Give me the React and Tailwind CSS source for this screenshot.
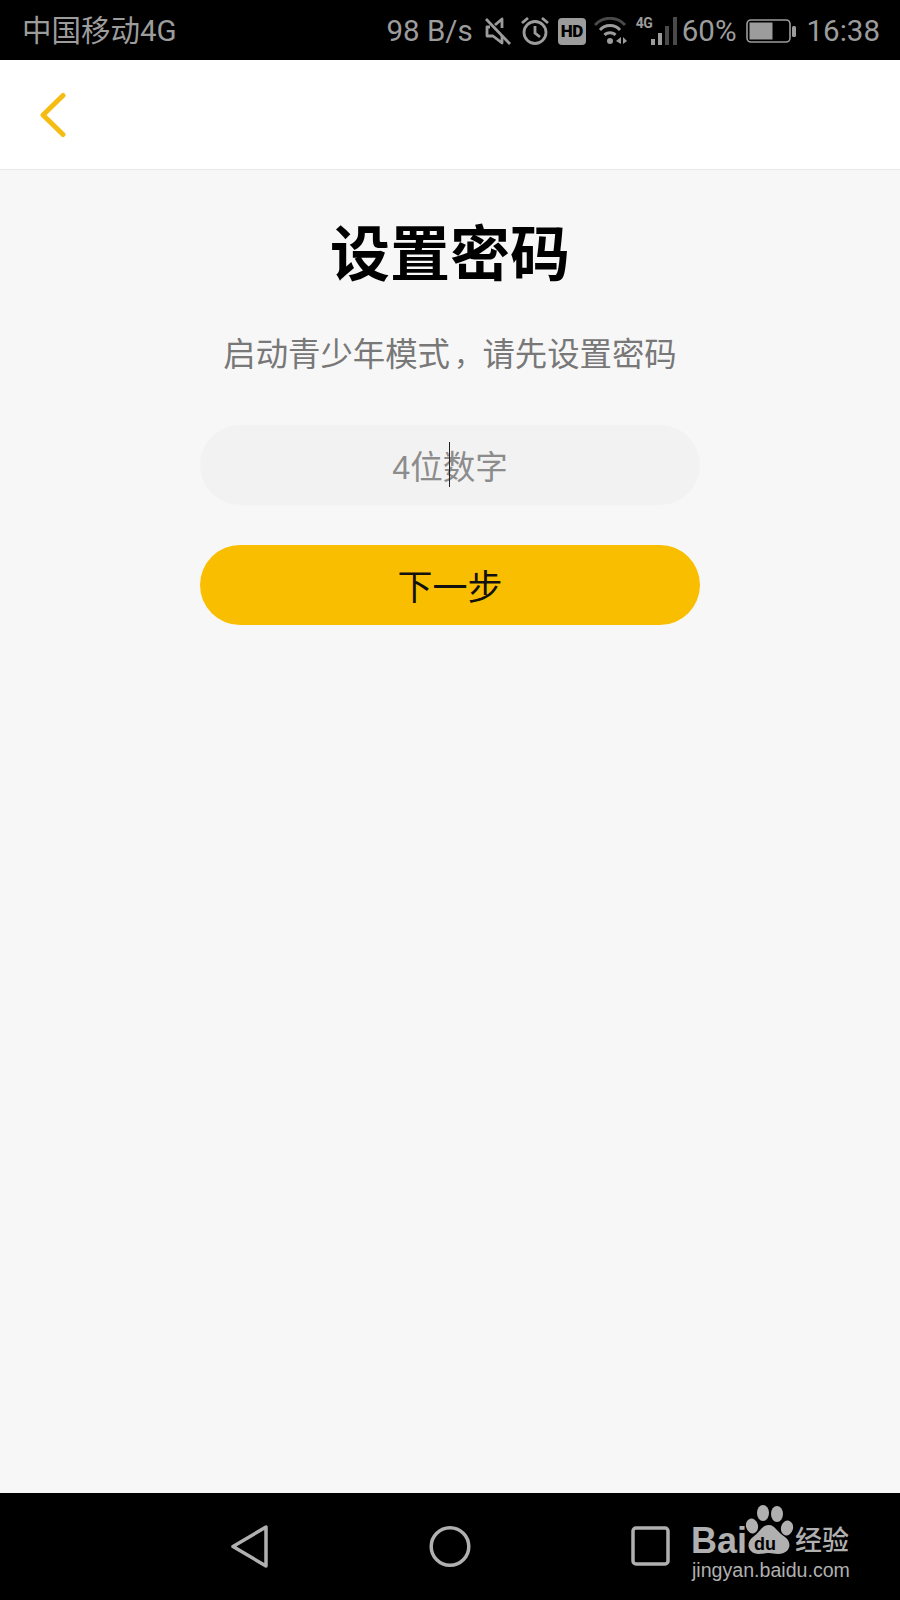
const sans = "font-['Roboto','Noto_Sans_CJK_SC',sans-serif]";

function StatusBar() {
  return (
    <div className={`h-[60px] overflow-hidden bg-black pt-[2px] text-[29.5px] leading-[58px] text-[#9c9c9c] ${sans}`}>
      <div className="flex h-full items-center pl-[22px] pr-[20px]">
        <span className="whitespace-nowrap">中国移动4G</span>
        <div className="ml-auto flex items-center">
          <span className="whitespace-nowrap">98 B/s</span>
          <svg className="ml-[11px]" width="28" height="30" viewBox="0 0 28 30" fill="none" stroke="#9c9c9c" strokeWidth="2.8">
            <path d="M2 3 L26 28" />
            <path d="M6 11 H3 V20 H9 L18 27 V20 M18 12 V3 L11 9" strokeLinejoin="round" />
          </svg>
          <svg className="ml-[8px]" width="30" height="30" viewBox="0 0 30 30" fill="none" stroke="#9c9c9c" strokeWidth="2.8">
            <circle cx="15" cy="16.5" r="11" />
            <path d="M15 10 V17 L20 21" />
            <path d="M2 7 L8 2 M22 2 L28 7" />
          </svg>
          <div className="ml-[8px] flex h-[27px] w-[28px] items-center justify-center rounded-[4px] bg-[#9c9c9c] text-[17px] font-black leading-none tracking-[-0.5px] text-black">HD</div>
          <svg className="ml-[8px]" width="34" height="28" viewBox="0 0 34 28" fill="none">
            <path d="M1 8 C9 -1 23 -1 31 8" stroke="#4a4a4a" strokeWidth="2.8" />
            <path d="M6 13 C11 7 21 7 26 13" stroke="#9c9c9c" strokeWidth="2.8" />
            <path d="M10.5 18 C13 15 19 15 21.5 18" stroke="#9c9c9c" strokeWidth="2.8" />
            <circle cx="16" cy="24" r="3" fill="#9c9c9c" />
            <path d="M22 24 L27 20 V27 Z M29 20 V27 L33 24 Z" fill="#9c9c9c" />
          </svg>
          <div className="relative ml-[8px] h-[30px] w-[46px]">
            <span className="absolute left-0 top-[-1px] text-[14px] font-bold leading-[16px] tracking-[-0.5px]">4G</span>
            <svg className="absolute left-0 top-0" width="46" height="30" viewBox="0 0 46 30">
              <rect x="15" y="23" width="4" height="6" fill="#9c9c9c" />
              <rect x="22" y="17" width="4" height="12" fill="#9c9c9c" />
              <rect x="29" y="10" width="4" height="19" fill="#4a4a4a" />
              <rect x="37" y="1" width="4" height="28" fill="#4a4a4a" />
            </svg>
          </div>
          <span className="whitespace-nowrap">60%</span>
          <svg className="ml-[9px]" width="50" height="26" viewBox="0 0 50 26" fill="none">
            <rect x="1" y="2" width="43" height="22" rx="4" stroke="#9c9c9c" strokeWidth="1.6" />
            <rect x="3.5" y="4.5" width="23" height="17" fill="#9c9c9c" />
            <rect x="46" y="8" width="4" height="11" rx="1.5" fill="#9c9c9c" />
          </svg>
          <span className="ml-[11px] whitespace-nowrap">16:38</span>
        </div>
      </div>
    </div>
  );
}

function BaiduMark() {
  return (
    <div className={`absolute left-[691px] top-[12px] h-[86px] w-[165px] text-[#b0b0b0] ${sans}`}>
      <span className="absolute left-0 top-[18px] font-['Liberation_Sans',sans-serif] text-[36px] font-bold leading-[36px]">Bai</span>
      <svg className="absolute left-[54px] top-0" width="49" height="50" viewBox="0 0 49 50" fill="#b0b0b0">
        <ellipse cx="7" cy="21" rx="6" ry="7.5" transform="rotate(-15 7 21)" />
        <ellipse cx="18" cy="8" rx="6" ry="8" />
        <ellipse cx="32" cy="9" rx="6" ry="8" />
        <ellipse cx="42" cy="23" rx="6" ry="7.5" transform="rotate(15 42 23)" />
        <path d="M24 20 C30 20 32 27 40 32 C48 38 45 49 33 49 C29 49 27 48 24 48 C21 48 19 49 14 49 C3 49 0 38 8 32 C15 27 17 20 24 20 Z" />
      </svg>
      <span className="absolute left-[63px] top-[30px] font-['Liberation_Sans',sans-serif] text-[18px] font-bold leading-[18px] text-black">du</span>
      <span className="absolute left-[104px] top-[22px] whitespace-nowrap text-[27px] font-medium leading-[28px]">经验</span>
      <span className="absolute left-[1px] top-[53px] whitespace-nowrap font-['Liberation_Sans',sans-serif] text-[19.6px] leading-[24px]">jingyan.baidu.com</span>
    </div>
  );
}

function NavBar() {
  return (
    <div className="relative h-[107px] shrink-0 bg-black">
      <svg className="absolute left-[231px] top-[32px]" width="38" height="43" viewBox="0 0 38 43" fill="none" stroke="#b0b0b0" strokeWidth="3.5" strokeLinejoin="round">
        <path d="M35 2 V41 L2 21.5 Z" />
      </svg>
      <svg className="absolute left-[429px] top-[32px]" width="42" height="43" viewBox="0 0 42 43" fill="none" stroke="#b0b0b0" strokeWidth="3.5">
        <circle cx="21" cy="21.5" r="18.8" />
      </svg>
      <svg className="absolute left-[631px] top-[33px]" width="39" height="40" viewBox="0 0 39 40" fill="none" stroke="#b0b0b0" strokeWidth="3.5">
        <rect x="2" y="2" width="35" height="36" rx="3" />
      </svg>
      <BaiduMark />
    </div>
  );
}

export default function App() {
  return (
    <div className={`flex h-[1600px] w-[900px] flex-col bg-[#f7f7f7] ${sans}`}>
      <StatusBar />
      <header className="flex h-[110px] shrink-0 items-center border-b border-[#e8e8e8] bg-white pl-[40px]">
        <svg width="26" height="46" viewBox="0 0 26 46" fill="none" stroke="#f5bd14" strokeWidth="5" strokeLinecap="round" strokeLinejoin="round">
          <path d="M23 3.5 L3 23 L23 42.5" />
        </svg>
      </header>
      <main className="flex flex-1 flex-col items-center">
        <h1 className="mt-[44px] text-[60px] font-bold leading-[84px] text-black">设置密码</h1>
        <p className="mt-[33px] text-[32.4px] leading-[48px] text-[#787878]">启动青少年模式<span className="pl-[4px] text-[28.4px]">，</span>请先设置密码</p>
        <div className="relative mt-[44px] flex h-[80px] w-[500px] items-center justify-center rounded-full bg-[#f2f2f2] pt-[7px] text-[32.5px] text-[#8c8c8c]">
          <span className="font-['Liberation_Sans','Noto_Sans_CJK_SC',sans-serif]">4位数字</span>
          <span className="absolute left-[249px] top-[17px] h-[45px] w-px bg-[#222]" />
        </div>
        <button className="mt-[40px] flex h-[80px] w-[500px] items-center justify-center rounded-full bg-[#fabe00] pt-[8px] text-[35px] text-[#111]">下一步</button>
      </main>
      <NavBar />
    </div>
  );
}
